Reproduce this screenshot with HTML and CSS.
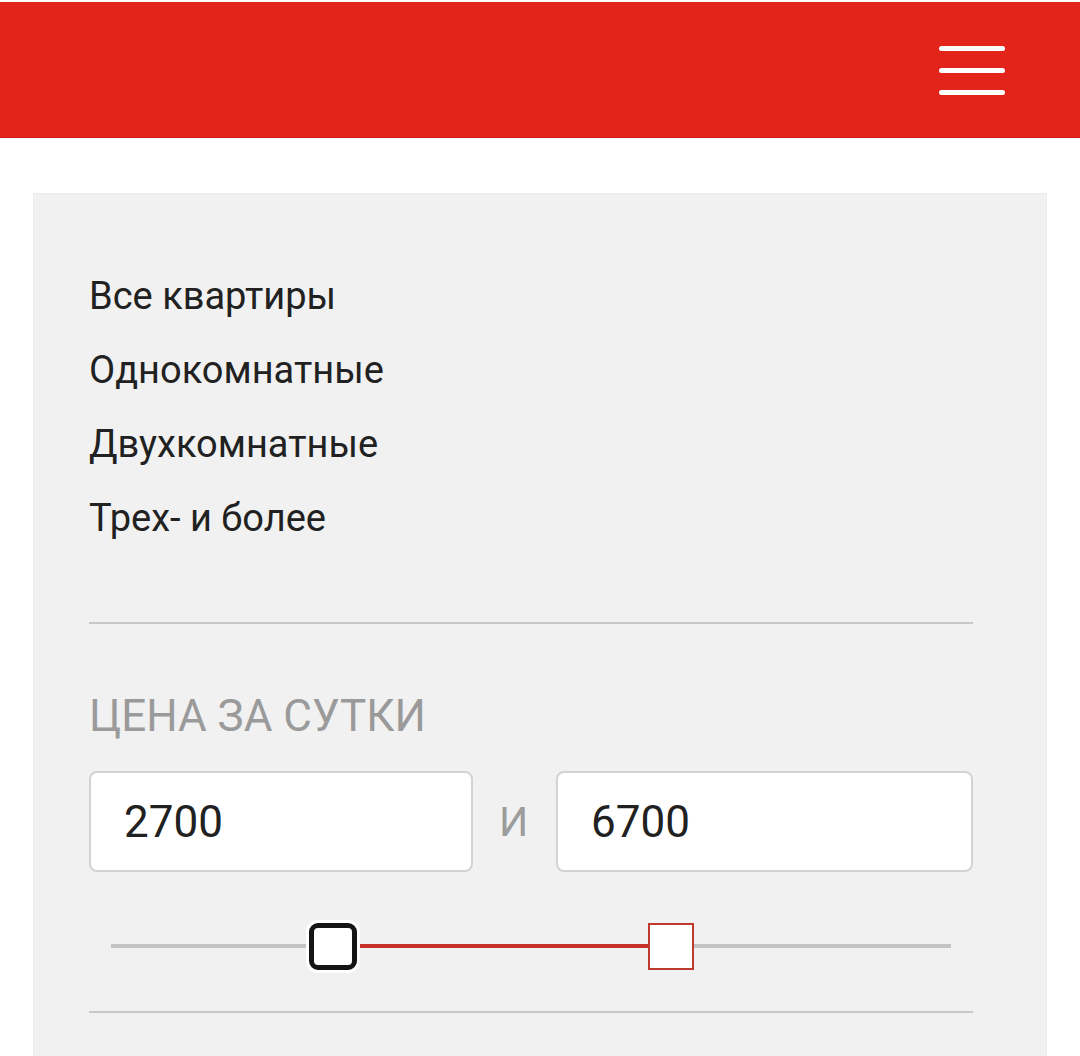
FILE: index.html
```html
<!DOCTYPE html>
<html lang="ru">
<head>
    <meta charset="UTF-8">
    <meta name="viewport" content="width=device-width, initial-scale=1.0">
    <title>Квартиры посуточно</title>
    <link rel="stylesheet" href="styles.css">
</head>
<body>
    <div class="header">
        <a class="menu-btn" href="#" aria-label="Меню">
            <span></span>
            <span></span>
            <span></span>
        </a>
    </div>
    <div class="filter">
        <ul class="rooms">
            <li><a href="#">Все квартиры</a></li>
            <li><a href="#">Однокомнатные</a></li>
            <li><a href="#">Двухкомнатные</a></li>
            <li><a href="#">Трех- и более</a></li>
        </ul>
        <div class="divider"></div>
        <h3 class="filter-title">Цена за сутки</h3>
        <div class="price-row">
            <input class="price-input" type="text" value="2700">
            <span class="price-sep">и</span>
            <input class="price-input" type="text" value="6700">
        </div>
        <div class="range">
            <div class="range-track">
                <div class="range-fill" style="left: 29.2%; width: 35.2%;"></div>
            </div>
            <span class="range-handle handle-min" style="left: 23.4%;"></span>
            <span class="range-handle handle-max" style="left: 63.9%;"></span>
        </div>
        <div class="divider"></div>
    </div>
</body>
</html>
```

FILE: styles.css
```css
body {
    font-family: Roboto, "Noto Sans", Arial, sans-serif;
    margin: 0;
    padding: 2px 0 0;
    background-color: #fff;
    color: #212121;
}
.header {
    background-color: #e3241b;
    height: 136px;
    display: flex;
    align-items: center;
    justify-content: flex-end;
    padding-right: 75px;
    border-bottom: 1px solid #c9221a;
    box-sizing: border-box;
}
.menu-btn {
    display: flex;
    flex-direction: column;
    gap: 17px;
    width: 66px;
    margin-top: 2px;
}
.menu-btn span {
    display: block;
    height: 5px;
    border-radius: 3px;
    background-color: #fff;
}
.filter {
    margin: 55px 33px 0;
    background-color: #f1f1f1;
    border: 1px solid #ebebeb;
    padding: 65px 73px 80px 55px;
}
.rooms {
    list-style: none;
    margin: 0;
    padding: 0;
}
.rooms li {
    font-size: 38px;
    line-height: 74px;
}
.rooms a {
    color: #212121;
    text-decoration: none;
}
.divider {
    height: 2px;
    background-color: #c8c8c8;
}
.rooms + .divider {
    margin-top: 67px;
}
.filter-title {
    margin: 66px 0 29px;
    font-size: 44px;
    line-height: 52px;
    font-weight: 400;
    text-transform: uppercase;
    color: #9a9a9a;
}
.price-row {
    display: grid;
    grid-template-columns: 384px 1fr 417px;
    align-items: center;
}
.price-input {
    box-sizing: border-box;
    height: 101px;
    width: 100%;
    border: 2px solid #d3d3d3;
    border-radius: 8px;
    background-color: #fff;
    padding: 0 33px;
    font-family: Roboto, "Noto Sans", Arial, sans-serif;
    font-size: 44px;
    color: #212121;
    outline: none;
}
.price-sep {
    text-align: center;
    font-size: 41px;
    text-transform: uppercase;
    color: #9c9c9c;
    padding-right: 2px;
}
.range {
    position: relative;
    margin: 51px 22px 40px;
    height: 48px;
}
.range-track {
    position: absolute;
    left: 0;
    right: 0;
    top: 21px;
    height: 4px;
    background-color: #c4c4c4;
}
.range-fill {
    position: absolute;
    top: 0;
    height: 4px;
    background-color: #c8302a;
}
.range-handle {
    position: absolute;
    top: 0;
    box-sizing: border-box;
    width: 48px;
    height: 48px;
    background-color: #fff;
}
.handle-min {
    border: 5px solid #151515;
    border-radius: 9px;
    box-shadow: 0 0 0 3px #fff;
    margin-left: 1px;
    height: 47px;
}
.handle-max {
    width: 46px;
    height: 47px;
    border: 2px solid #c0392f;
}
```
